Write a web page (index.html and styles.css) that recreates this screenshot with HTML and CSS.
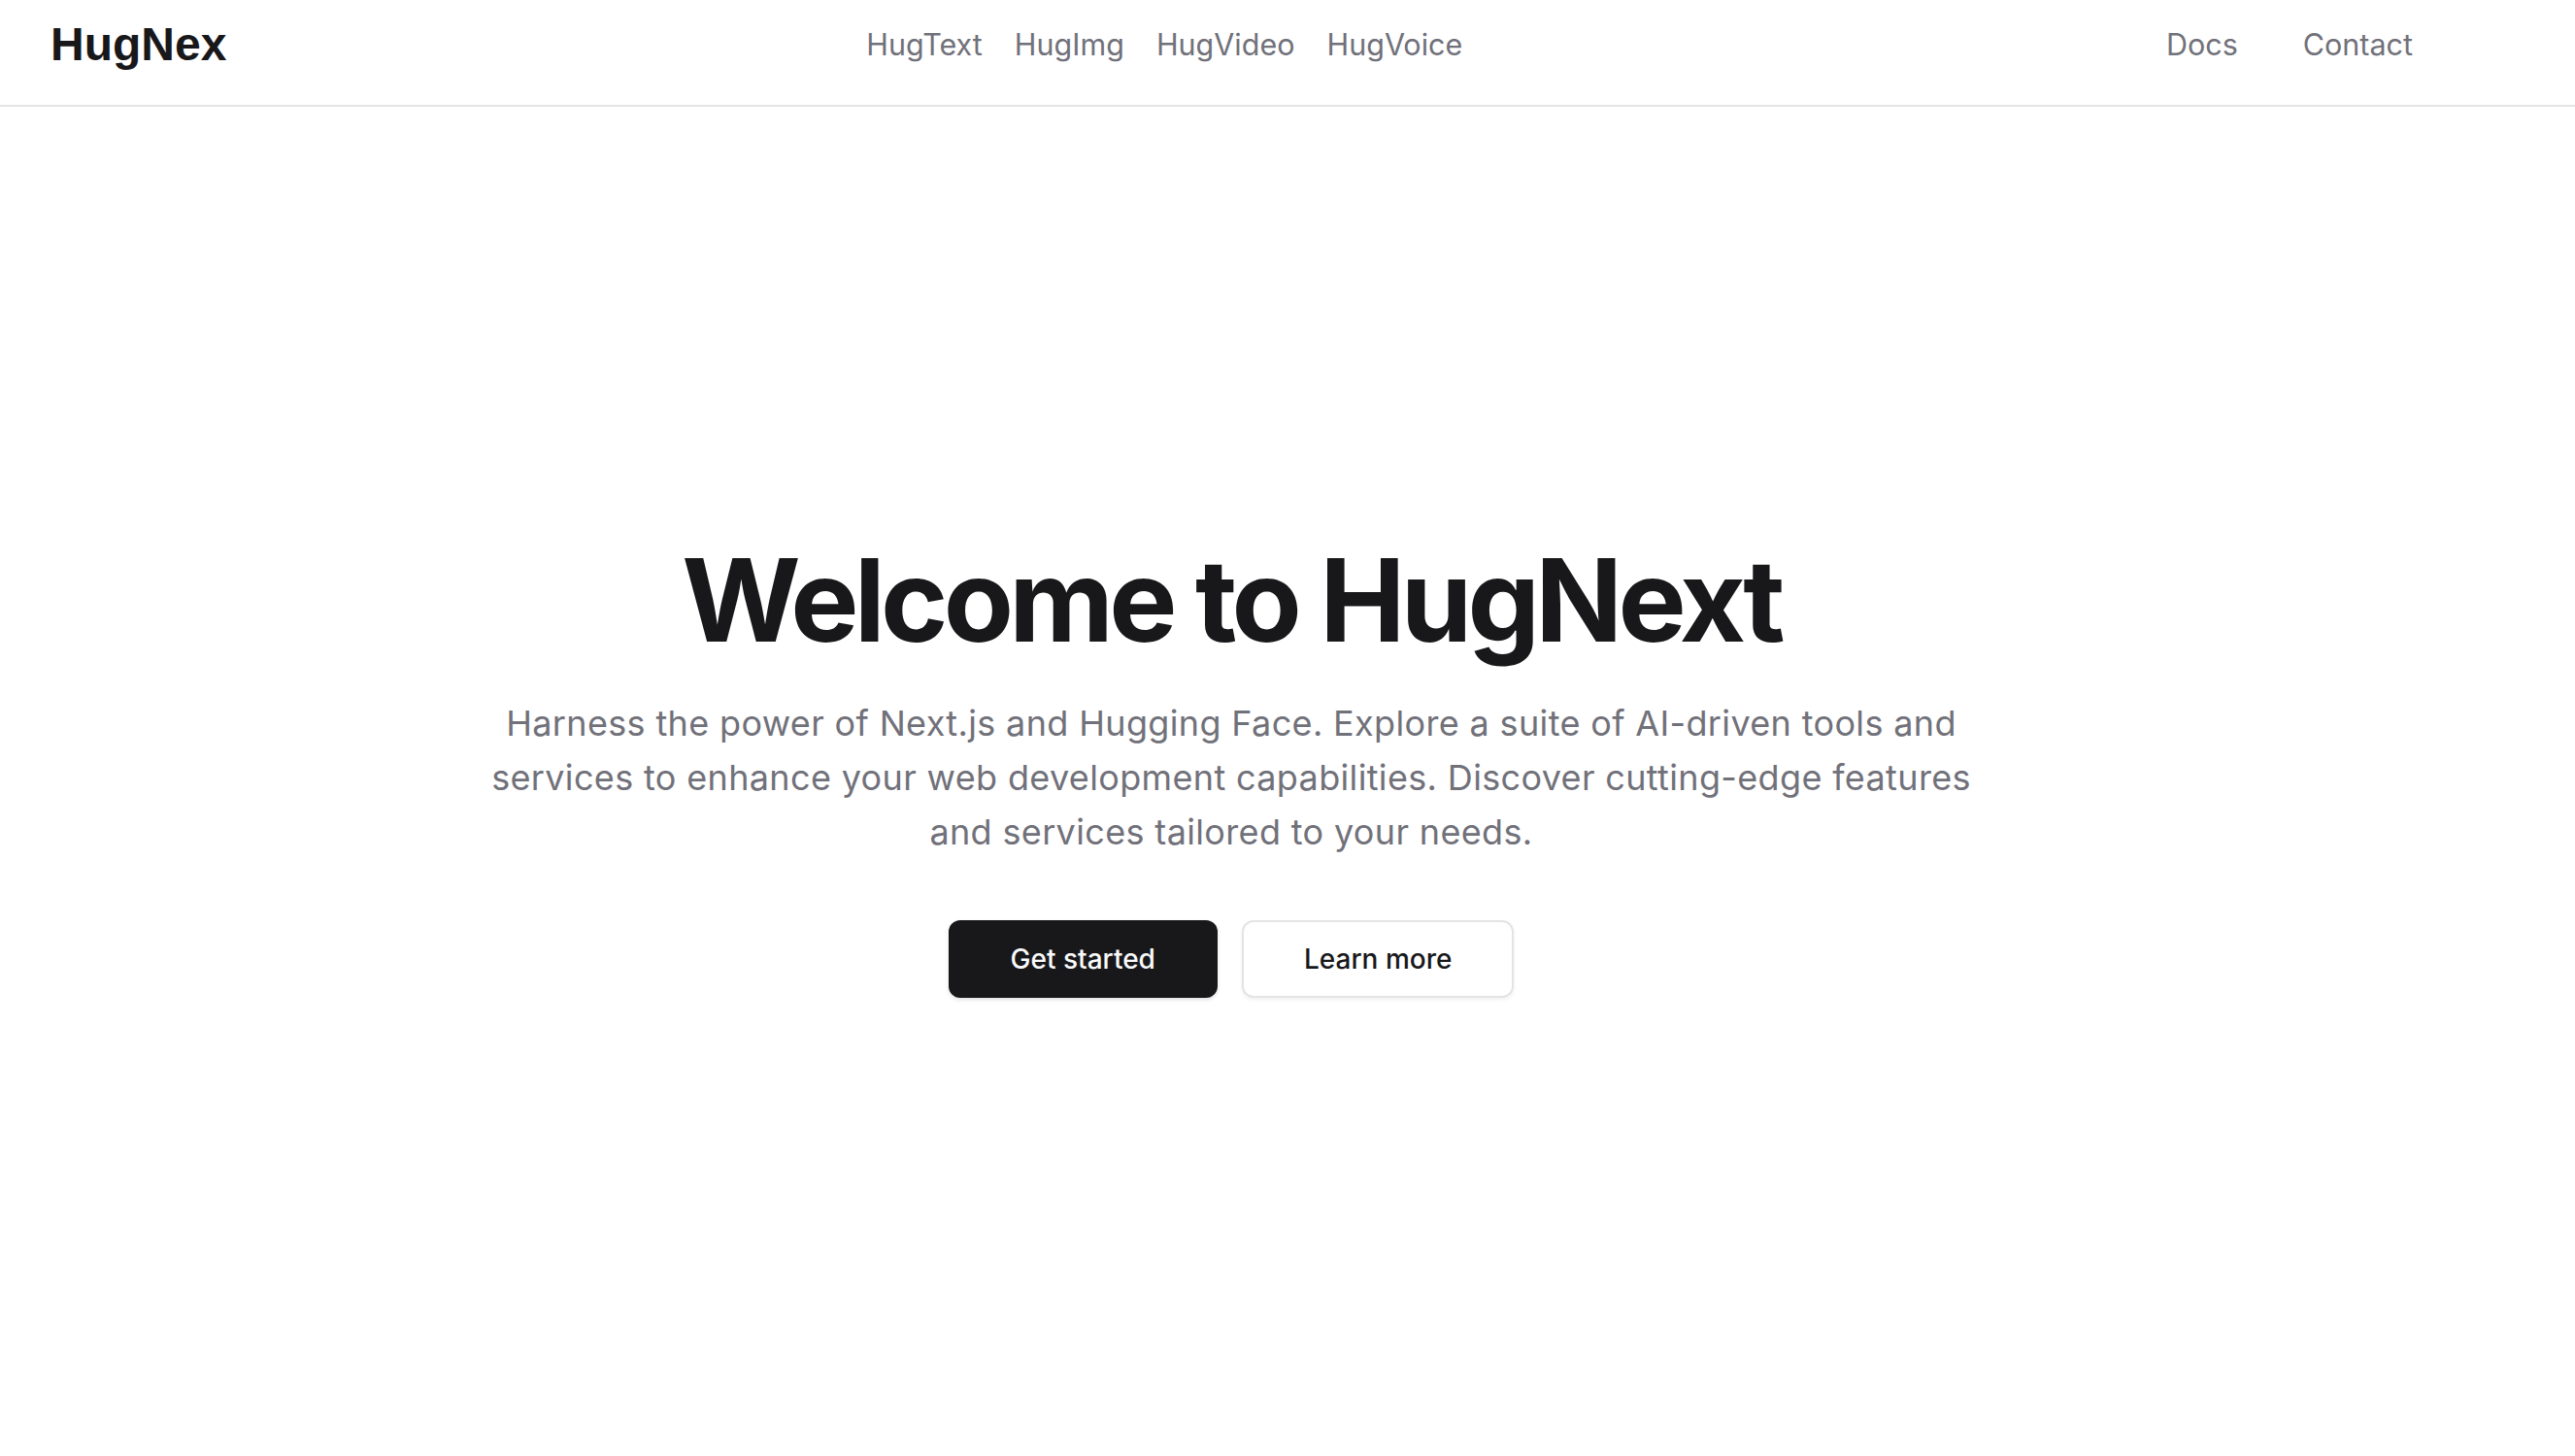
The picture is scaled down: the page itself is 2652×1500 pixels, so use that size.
FILE: index.html
```html
<!DOCTYPE html>
<html lang="en">
<head>
<meta charset="utf-8">
<title>HugNext</title>
<link rel="stylesheet" href="styles.css">
</head>
<body>
<header class="site-header">
  <a class="logo" href="#">HugNex</a>
  <nav class="main-nav">
    <a href="#">HugText</a>
    <a href="#">HugImg</a>
    <a href="#">HugVideo</a>
    <a href="#">HugVoice</a>
  </nav>
  <nav class="side-nav">
    <a href="#">Docs</a>
    <a href="#">Contact</a>
  </nav>
</header>
<main class="hero">
  <h1 class="hero-title">Welcome to HugNext</h1>
  <p class="hero-text">Harness the power of Next.js and Hugging Face. Explore a suite of AI-driven tools and services to enhance your web development capabilities. Discover cutting-edge features and services tailored to your needs.</p>
  <div class="hero-actions">
    <a class="btn btn-primary" href="#">Get started</a>
    <a class="btn btn-outline" href="#">Learn more</a>
  </div>
</main>
</body>
</html>
```

FILE: styles.css
```css
* { box-sizing: border-box; }

html, body {
  margin: 0;
  padding: 0;
  background: #ffffff;
}

body {
  font-family: Inter, "Noto Sans", sans-serif;
  color: #18181b;
  width: 2652px;
  min-height: 1500px;
}

a { text-decoration: none; color: inherit; }

.site-header {
  display: flex;
  align-items: center;
  height: 110px;
  padding: 0 167px 18px 52px;
  border-bottom: 2px solid #e4e4e7;
}

.logo {
  font-family: "Liberation Sans", Arial, sans-serif;
  font-weight: 700;
  font-size: 48px;
  color: #18181b;
}

.main-nav {
  display: flex;
  gap: 33px;
  margin-left: 659px;
}

.main-nav a,
.side-nav a {
  font-size: 30.5px;
  color: #71717a;
}

.side-nav {
  display: flex;
  gap: 67px;
  margin-left: auto;
}

.hero {
  display: flex;
  flex-direction: column;
  align-items: center;
  padding: 449px 116px 0 0;
  text-align: center;
}

.hero-title {
  margin: 0;
  font-size: 118px;
  line-height: 1;
  font-weight: 700;
  letter-spacing: -0.04em;
  color: #18181b;
}

.hero-text {
  margin: 40px 0 0;
  max-width: 1565px;
  font-size: 36px;
  line-height: 56px;
  letter-spacing: 0.35px;
  color: #71717a;
}

.hero-actions {
  display: flex;
  gap: 25px;
  margin-top: 63px;
}

.btn {
  display: inline-flex;
  align-items: center;
  justify-content: center;
  height: 80px;
  padding: 0 64px;
  border-radius: 12px;
  font-size: 28px;
  font-weight: 500;
}

.btn-primary {
  background: #18181b;
  color: #fafafa;
  box-shadow: 0 2px 4px rgba(0, 0, 0, 0.12);
}

.btn-outline {
  padding: 0 62px;
  background: #ffffff;
  color: #18181b;
  border: 2px solid #e4e4e7;
  box-shadow: 0 2px 4px rgba(0, 0, 0, 0.06);
}
```
